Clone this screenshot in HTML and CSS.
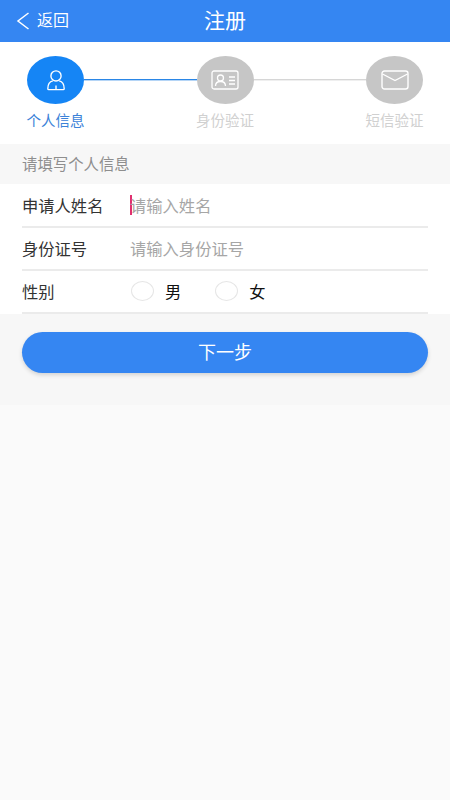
FILE: index.html
```html
<!DOCTYPE html>
<html lang="zh-CN">
<head>
  <meta charset="UTF-8">
  <meta name="viewport" content="width=device-width, initial-scale=1.0">
  <title>注册</title>
  <link rel="stylesheet" href="styles.css">
</head>
<body>
  <!-- Header -->
  <header class="top-bar">
    <a class="back-link" href="#">
      <svg class="back-icon" viewBox="0 0 14 18" width="14" height="18">
        <path d="M12.5 1 L2 9 L12.5 17" fill="none" stroke="#fff" stroke-width="1.5"/>
      </svg>
      <span>返回</span>
    </a>
    <h1>注册</h1>
  </header>

  <!-- Steps -->
  <div class="steps">
    <div class="step active">
      <div class="step-circle">
        <svg viewBox="0 0 22 24" width="20" height="22" fill="none" stroke="#fff" stroke-width="1.5">
          <circle cx="11" cy="7.5" r="5.6"/>
          <path d="M7.5 13 C3.5 14 2 16.5 2 21.5 C2 22.3 2.4 22.6 3 22.6 L19 22.6 C19.6 22.6 20 22.3 20 21.5 C20 16.5 18.5 14 14.5 13"/>
          <path d="M11 18 L11 22.5"/>
        </svg>
      </div>
      <span class="step-label">个人信息</span>
    </div>
    <div class="step-line line-on"></div>
    <div class="step">
      <div class="step-circle">
        <svg viewBox="0 0 28 20" width="28" height="20" fill="none" stroke="#fff" stroke-width="1.3">
          <rect x="1" y="1" width="26" height="18" rx="2"/>
          <circle cx="9.5" cy="8" r="3"/>
          <path d="M4.5 16 C4.5 12.5 6.5 11.5 9.5 11.5 C12.5 11.5 14.5 12.5 14.5 16"/>
          <path d="M18 7 L24 7 M18 10.5 L24 10.5 M18 14 L24 14"/>
        </svg>
      </div>
      <span class="step-label">身份验证</span>
    </div>
    <div class="step-line"></div>
    <div class="step">
      <div class="step-circle">
        <svg viewBox="0 0 28 20" width="28" height="20" fill="none" stroke="#fff" stroke-width="1.4">
          <rect x="1" y="1" width="26" height="18" rx="2.5"/>
          <path d="M1.5 4 L14 10.5 L26.5 4"/>
        </svg>
      </div>
      <span class="step-label">短信验证</span>
    </div>
  </div>

  <main class="content">
    <div class="section-title">请填写个人信息</div>

    <!-- Form -->
    <div class="form-box">
      <div class="form-row">
        <span class="form-label">申请人姓名</span>
        <span class="caret"></span>
        <span class="placeholder first">请输入姓名</span>
      </div>
      <div class="form-row">
        <span class="form-label">身份证号</span>
        <span class="placeholder">请输入身份证号</span>
      </div>
      <div class="form-row">
        <span class="form-label">性别</span>
        <div class="radio-group">
          <span class="radio"></span>
          <span class="radio-text">男</span>
          <span class="radio second"></span>
          <span class="radio-text">女</span>
        </div>
      </div>
    </div>

    <div class="button-area">
      <a class="next-btn" href="#">下一步</a>
    </div>
  </main>
</body>
</html>
```

FILE: styles.css
```css
/* General Reset */
* {
  margin: 0;
  padding: 0;
  box-sizing: border-box;
}

body {
  font-family: "Liberation Sans", "Noto Sans CJK SC", sans-serif;
  background-color: #fafafa;
  height: 800px;
  overflow: hidden;
}

/* Header */
.top-bar {
  height: 42px;
  padding-bottom: 1px;
  background-color: #3586f2;
  color: #fff;
  display: flex;
  align-items: center;
  justify-content: center;
  position: relative;
}

.top-bar h1 {
  font-size: 21px;
  line-height: 28px;
  font-weight: normal;
}

.back-link {
  position: absolute;
  left: 16px;
  top: 11px;
  display: flex;
  align-items: center;
  gap: 7px;
  color: #fff;
  font-size: 16px;
  line-height: 20px;
  text-decoration: none;
}

/* Steps */
.steps {
  height: 102px;
  background-color: #fff;
  padding: 14px 27px 0;
  display: flex;
  align-items: flex-start;
}

.step {
  width: 57px;
  flex: none;
  display: flex;
  flex-direction: column;
  align-items: center;
}

.step-circle {
  width: 57px;
  height: 48px;
  border-radius: 50%;
  background-color: #c6c6c6;
  display: flex;
  align-items: center;
  justify-content: center;
}

.step.active .step-circle {
  background-color: #1585f5;
}

.step-label {
  margin-top: 7px;
  font-size: 14.5px;
  line-height: 20px;
  white-space: nowrap;
  color: #d0d0d0;
}

.step.active .step-label {
  color: #3b82d8;
}

.step-line {
  flex: 1;
  height: 1px;
  margin-top: 23px;
  background-color: #d6d6d6;
  box-shadow: 0 1px 0 rgba(214, 214, 214, 0.4);
}

.step-line.line-on {
  background-color: #2a86e6;
  box-shadow: 0 1px 0 rgba(42, 134, 230, 0.35);
}

/* Section */
.content {
  background-color: #f7f7f7;
  height: 261px;
}

.section-title {
  height: 40px;
  line-height: 41px;
  padding-left: 22px;
  font-size: 15.4px;
  color: #8e8e8e;
}

/* Form */
.form-box {
  background-color: #fff;
  padding: 1px 22px 0;
}

.form-row {
  height: 43px;
  padding-bottom: 2px;
  border-bottom: 2px solid #ebebeb;
  display: flex;
  align-items: center;
  font-size: 16.3px;
}

.form-label {
  width: 108px;
  flex: none;
  color: #333;
}

.placeholder {
  color: #a6a6a6;
}

.placeholder.first {
  margin-left: -2px;
}

.caret {
  width: 2px;
  height: 20px;
  background-color: #e0306f;
  flex: none;
}

.radio-group {
  display: flex;
  align-items: center;
  padding-left: 1px;
}

.radio {
  width: 23px;
  height: 20px;
  border: 1px solid #e6e6e6;
  border-radius: 50%;
  background-color: #fff;
}

.radio.second {
  margin-left: 34px;
}

.radio-text {
  margin-left: 11px;
  color: #111;
}

/* Button */
.button-area {
  padding: 18px 22px 0;
}

.next-btn {
  display: block;
  height: 41px;
  padding-top: 2px;
  line-height: 39px;
  border-radius: 21px;
  background-color: #3586f2;
  box-shadow: 0 2px 4px rgba(0, 0, 0, 0.15);
  color: #fff;
  font-size: 18px;
  text-align: center;
  text-decoration: none;
}
```
